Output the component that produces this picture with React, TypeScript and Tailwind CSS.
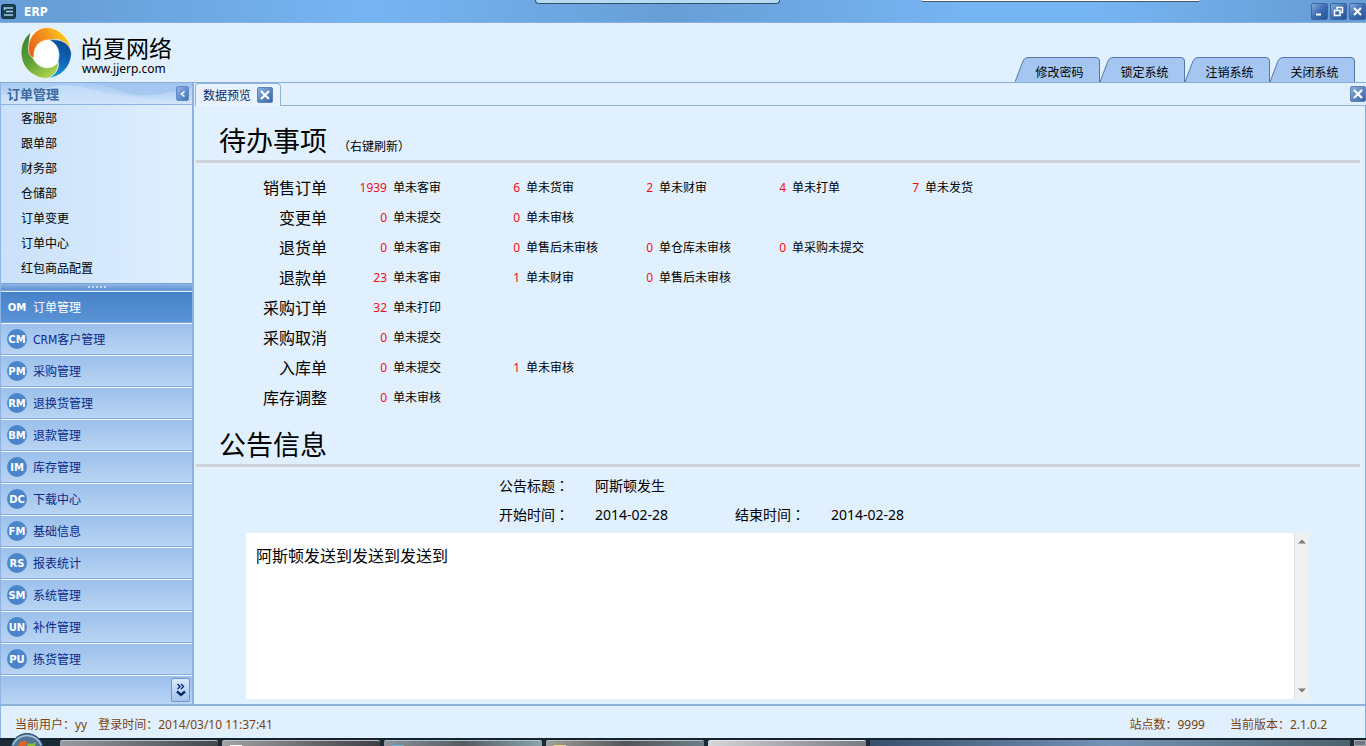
import React, { useState } from 'react';

const subMenus = ['客服部', '跟单部', '财务部', '仓储部', '订单变更', '订单中心', '红包商品配置'];

const modules = [
  { code: 'OM', name: '订单管理' },
  { code: 'CM', name: 'CRM客户管理' },
  { code: 'PM', name: '采购管理' },
  { code: 'RM', name: '退换货管理' },
  { code: 'BM', name: '退款管理' },
  { code: 'IM', name: '库存管理' },
  { code: 'DC', name: '下载中心' },
  { code: 'FM', name: '基础信息' },
  { code: 'RS', name: '报表统计' },
  { code: 'SM', name: '系统管理' },
  { code: 'UN', name: '补件管理' },
  { code: 'PU', name: '拣货管理' },
];

const systemTabs = ['修改密码', '锁定系统', '注销系统', '关闭系统'];

interface TodoRow {
  title: string;
  items: [number, string][];
}

const todoRows: TodoRow[] = [
  { title: '销售订单', items: [[1939, '单未客审'], [6, '单未货审'], [2, '单未财审'], [4, '单未打单'], [7, '单未发货']] },
  { title: '变更单', items: [[0, '单未提交'], [0, '单未审核']] },
  { title: '退货单', items: [[0, '单未客审'], [0, '单售后未审核'], [0, '单仓库未审核'], [0, '单采购未提交']] },
  { title: '退款单', items: [[23, '单未客审'], [1, '单未财审'], [0, '单售后未审核']] },
  { title: '采购订单', items: [[32, '单未打印']] },
  { title: '采购取消', items: [[0, '单未提交']] },
  { title: '入库单', items: [[0, '单未提交'], [1, '单未审核']] },
  { title: '库存调整', items: [[0, '单未审核']] },
];

function Logo() {
  return (
    <svg width="52" height="52" viewBox="0 0 52 52" aria-hidden="true">
      <defs>
        <linearGradient id="lgGreen" x1="0" y1="0" x2="0.6" y2="1">
          <stop offset="0" stopColor="#2f7d32" />
          <stop offset="0.6" stopColor="#5fa336" />
          <stop offset="1" stopColor="#a5cf4c" />
        </linearGradient>
        <linearGradient id="lgOrange" x1="0" y1="0.6" x2="1" y2="0.3">
          <stop offset="0" stopColor="#e8641b" />
          <stop offset="0.5" stopColor="#f59a1b" />
          <stop offset="1" stopColor="#fbd51d" />
        </linearGradient>
        <linearGradient id="lgBlue" x1="0.6" y1="0" x2="0.3" y2="1">
          <stop offset="0" stopColor="#0b4a94" />
          <stop offset="0.5" stopColor="#0d67b4" />
          <stop offset="1" stopColor="#22a0da" />
        </linearGradient>
      </defs>
      <circle cx="26" cy="26" r="25" fill="#fff" />
      <path d="M11 5 A26 26 0 0 0 27 51.500 C35 49 39 42 38 35 C33 43 20 43 14 33 C9 25 8 14 11 5Z" fill="url(#lgGreen)" stroke="#fff" strokeWidth="0.600" />
      <path d="M9 26 C6 12 16 0 28 0.500 A26 26 0 0 1 51 23 C46 14 38 11 31 13 C21 12 13 18 14 31 C11 30 9.500 28 9 26Z" fill="url(#lgOrange)" stroke="#fff" strokeWidth="0.600" />
      <path d="M29 13 C41 11 51 17 51.500 27 A26 26 0 0 1 27 51.500 C35 49 40 41 38 34 C41 25 37 16 29 13Z" fill="url(#lgBlue)" stroke="#fff" strokeWidth="0.600" />
      <circle cx="26" cy="26.500" r="11.500" fill="#fff" />
    </svg>
  );
}

function CloseButton({ label }: { label: string }) {
  return (
    <button
      type="button"
      aria-label={label}
      className="flex size-4 shrink-0 items-center justify-center rounded-xs border border-[#5c82b8] bg-linear-to-br from-[#8db0dc] to-[#3564a8]"
    >
      <svg width="10" height="10" viewBox="0 0 10 10" stroke="#fff" strokeWidth="2.200">
        <path d="M1 1 L9 9 M9 1 L1 9" />
      </svg>
    </button>
  );
}

function WindowButton({ label, children }: { label: string; children: React.ReactNode }) {
  return (
    <button
      type="button"
      aria-label={label}
      className="flex size-[17px] items-center justify-center rounded-xs border border-[#3c66a6] bg-linear-to-br from-[#84aadb] via-[#3d6db3] to-[#28529a]"
    >
      <svg width="11" height="11" viewBox="0 0 11 11" fill="none" stroke="#fff" strokeWidth="1.500">
        {children}
      </svg>
    </button>
  );
}

function TitleBar() {
  return (
    <header className="relative flex h-[23px] shrink-0 items-center justify-between border-b border-[#86aed8] bg-[linear-gradient(90deg,#689ed6_4%,#76b5f3_27%,#689ed6_49%,#76b5f3_71%,#76b5f3_80%,#689ed6_97%)]">
      <div className="flex items-center gap-2 pl-px">
        <svg width="15" height="15" viewBox="0 0 15 15" aria-hidden="true">
          <rect x="0.500" y="0.500" width="14" height="14" rx="2" fill="#1d3f52" stroke="#16303f" />
          <path d="M3 4 H12 M5 7.500 H12 M3 11 H12 M3.500 3.500 V6" stroke="#9fd0e6" strokeWidth="1.600" />
        </svg>
        <h1 className="pt-0.5 text-[12px] font-bold text-white">ERP</h1>
      </div>
      <div className="flex gap-0.5">
        <WindowButton label="最小化">
          <path d="M2 8.500 H7" strokeWidth="2" />
        </WindowButton>
        <WindowButton label="还原">
          <path d="M4 3.500 V1.500 H9.500 V6.500 H7.500 M1.500 4.500 H7 V9.500 H1.500 Z" />
        </WindowButton>
        <WindowButton label="关闭">
          <path d="M2 2 L9 9 M9 2 L2 9" strokeWidth="2.200" />
        </WindowButton>
      </div>
      {/* windows hanging over the top edge */}
      <div className="absolute top-0 left-[535px] h-1 w-[245px] rounded-b-sm border border-t-0 border-[#31536f] bg-[#b5dbf1]" />
      <div className="absolute top-0 left-[921px] h-0.5 w-[279px] rounded-b-xs border-b border-[#4a5560] bg-white" />
    </header>
  );
}

function Banner() {
  return (
    <div className="flex h-[60px] shrink-0 items-end justify-between border-b border-[#86aed8] pr-[11px]">
      <div className="flex gap-2 self-start pt-1 pl-5">
        <Logo />
        <div className="pt-2">
          <div className="text-[23px] leading-7">尚夏网络</div>
          <div className="pl-0.5 font-['Noto_Sans',sans-serif] text-[12px] leading-3">www.jjerp.com</div>
        </div>
      </div>
      <nav className="flex">
        {systemTabs.map((tab) => (
          <button key={tab} type="button" className="relative h-[25px] w-[85px] pt-1.5 pl-1 text-[12px]">
            <svg className="absolute inset-0" width="85" height="25" viewBox="0 0 85 25" aria-hidden="true">
              <path d="M0 25 L8 4 Q9.500 0.500 13 0.500 H81 Q84.500 0.500 84.500 4 V25" fill="#a5c6f1" stroke="#5578a8" />
            </svg>
            <span className="relative">{tab}</span>
          </button>
        ))}
      </nav>
    </div>
  );
}

function Sidebar() {
  const [active, setActive] = useState('OM');

  return (
    <aside className="flex w-[194px] shrink-0 flex-col border-r-2 border-l border-[#8db2e3]">
      <div className="relative flex h-[22px] items-center justify-between border-b border-[#8db2e3] bg-linear-to-b from-[#a9cbf2] to-[#cbe1f9] pr-[3px] pl-1.5">
        <svg className="absolute inset-0 size-full" viewBox="0 0 190 22" preserveAspectRatio="none" aria-hidden="true">
          <path d="M60 2 C90 2 110 18 190 18 V22 H0 V12 C30 14 50 2 60 2Z" fill="#d6e8fb" opacity="0.500" />
          <path d="M110 5 C140 20 165 10 190 5 V0 H90Z" fill="#9fc3ee" opacity="0.700" />
        </svg>
        <h2 className="relative pt-0.5 text-[13px] font-bold text-[#39699f]">订单管理</h2>
        <button
          type="button"
          aria-label="收起"
          className="relative flex h-[15px] w-[13px] items-center justify-center rounded-xs border border-[#5f89c4] bg-linear-to-br from-[#8fb3e2] to-[#4173ba]"
        >
          <svg width="6" height="6" viewBox="0 0 6 6" fill="none" stroke="#fff" strokeWidth="1.500">
            <path d="M4.500 0.500 L1.500 3 L4.500 5.500" />
          </svg>
        </button>
      </div>

      <ul className="flex-1 bg-linear-to-r from-[#c9e1fa] to-[#e0effe] pt-px text-[12px]">
        {subMenus.map((item) => (
          <li key={item} className="flex h-[25px] items-center pl-5">
            <a href="#">{item}</a>
          </li>
        ))}
      </ul>

      <div className="flex h-2 items-center justify-center gap-0.5 border-y border-[#7ba5d8] bg-linear-to-b from-[#8fb6e6] to-[#5e91cf]">
        {[0, 1, 2, 3, 4].map((dot) => (
          <span key={dot} className="size-0.5 bg-[#c5dbf4]" />
        ))}
      </div>

      <nav>
        {modules.map((m) => (
          <button
            key={m.code}
            type="button"
            onClick={() => setActive(m.code)}
            className={
              active === m.code
                ? 'flex h-8 w-full items-center gap-1.5 border-t border-b border-t-[#dcebfb] border-b-[#7ba3d4] bg-linear-to-b from-[#4781c8] to-[#5a94d6] pl-1.5 text-[12px] text-white'
                : 'flex h-8 w-full items-center gap-1.5 border-t border-b border-t-[#f2f8ff] border-b-[#84abdc] bg-linear-to-b from-[#9bc0ec] to-[#b9d4f3] pl-1.5 text-[12px] text-[#0a2a86]'
            }
          >
            <span
              className={
                active === m.code
                  ? "flex size-5 items-center justify-center font-['DejaVu_Sans',sans-serif] text-[10px] font-bold text-white"
                  : "flex size-5 items-center justify-center rounded-full bg-[#4b86cb] font-['DejaVu_Sans',sans-serif] text-[10px] font-bold text-white"
              }
            >
              {m.code}
            </span>
            <span className="pt-0.5">{m.name}</span>
          </button>
        ))}
      </nav>

      <div className="flex h-[29px] items-center justify-end border-t border-[#f2f8ff] bg-linear-to-b from-[#9bc0ec] to-[#b9d4f3] pr-0.5">
        <button
          type="button"
          aria-label="更多"
          className="flex h-6 w-[19px] items-center justify-center rounded-xs border border-[#6f97ce] bg-linear-to-b from-[#d9e9fb] to-[#a3c4ee]"
        >
          <svg width="10" height="14" viewBox="0 0 10 14" fill="none" stroke="#0a2a6e">
            <path d="M1.500 1 L4 3.500 L1.500 6 M5 1 L7.500 3.500 L5 6" strokeWidth="1.400" />
            <path d="M1 8.500 L5 12 L9 8.500" strokeWidth="2.400" />
          </svg>
        </button>
      </div>
    </aside>
  );
}

function TabStrip() {
  return (
    <div className="flex h-[23px] shrink-0 pl-px">
      <div className="flex w-[86px] items-center gap-1.5 rounded-t-sm border border-b-0 border-[#8fb3db] bg-[#e8f3ff] pl-[7px] text-[12px] text-[#0b2a6c]">
        <span className="pt-0.5">数据预览</span>
        <CloseButton label="关闭数据预览" />
      </div>
      <div className="flex flex-1 items-center justify-end border-b border-[#8fb3db]">
        <CloseButton label="关闭" />
      </div>
    </div>
  );
}

function TodoTable() {
  return (
    <table className="mt-[10px] w-[798px] table-fixed border-collapse self-start">
      <tbody>
        {todoRows.map((row) => (
          <tr key={row.title} className="h-[30px]">
            <th scope="row" className="p-0 text-right text-[16px] leading-5 font-normal">
              {row.title}
            </th>
            {row.items.map(([count, text], i) => (
              <td key={i} className="p-0 text-[12px] leading-5">
                <div className="flex gap-1.5">
                  <span className="w-[60px] shrink-0 text-right text-[#f20d18]">{count}</span>
                  <span className="whitespace-nowrap">{text}</span>
                </div>
              </td>
            ))}
          </tr>
        ))}
      </tbody>
    </table>
  );
}

function NoticeLabel({ children }: { children: React.ReactNode }) {
  return (
    <dt>
      {children}
      <span className="font-['Noto_Sans_CJK_TC',sans-serif]">：</span>
    </dt>
  );
}

function Notice() {
  return (
    <>
      <dl className="mt-1 grid auto-rows-[29px] grid-cols-[96px_140px_96px_140px] items-center pl-[305px] text-[14px] leading-5">
        <NoticeLabel>公告标题</NoticeLabel>
        <dd className="col-span-3">阿斯顿发生</dd>
        <NoticeLabel>开始时间</NoticeLabel>
        <dd>2014-02-28</dd>
        <NoticeLabel>结束时间</NoticeLabel>
        <dd>2014-02-28</dd>
      </dl>
      <div className="mt-1 mr-14 mb-[5px] ml-[52px] flex min-h-[120px] flex-1">
        <textarea
          readOnly
          aria-label="公告内容"
          defaultValue="阿斯顿发送到发送到发送到"
          className="flex-1 resize-none bg-white px-2.5 py-[11px] text-[16px] leading-6 outline-none"
        />
        <div className="flex w-[15px] flex-col items-center justify-between border-l border-[#e2e2e2] bg-[#f0f0f0] py-1.5">
          <svg width="8" height="5" viewBox="0 0 8 5" aria-hidden="true">
            <path d="M4 0.500 L8 4.500 H0Z" fill="#7d7d7d" />
          </svg>
          <svg width="8" height="5" viewBox="0 0 8 5" aria-hidden="true">
            <path d="M4 4.500 L8 0.500 H0Z" fill="#7d7d7d" />
          </svg>
        </div>
      </div>
    </>
  );
}

function StatusBar() {
  return (
    <footer className="flex h-[34px] shrink-0 items-center justify-between border-x border-t-2 border-[#8db2dc] pt-1.5 pr-[38px] pl-3.5 font-['Noto_Sans','Noto_Sans_CJK_SC',sans-serif] text-[12px] text-[#7a4212]">
      <div className="flex gap-[11px]">
        <span>当前用户：yy</span>
        <span>登录时间：2014/03/10 11:37:41</span>
      </div>
      <div className="flex gap-[25px]">
        <span>站点数：9999</span>
        <span>当前版本：2.1.0.2</span>
      </div>
    </footer>
  );
}

function Taskbar() {
  return (
    <div className="relative flex h-2 shrink-0 gap-1 border-t-2 border-[#14222e] bg-[#1b2a38] pl-[60px]">
      <svg className="absolute -top-[7px] left-2.5" width="34" height="13" viewBox="0 0 34 13" aria-hidden="true">
        <circle cx="17" cy="17" r="16.500" fill="#4f7594" stroke="#2c4a62" />
        <path d="M3 12 A15 15 0 0 1 31 12" fill="none" stroke="#a9c6db" strokeWidth="1.500" />
        <path d="M8 13 C10 7 14 7 17 9 L16 13Z" fill="#e0622a" />
        <path d="M18 10 C21 11 23 11 26 9 L25 13 H17Z" fill="#8dbb3a" />
      </svg>
      <div className="w-[158px] rounded-t-xs border-t border-[#b9bec2] bg-linear-to-r from-[#989ca0] to-[#43484d]" />
      <div className="w-[158px] rounded-t-xs border-t border-[#b9bec2] bg-linear-to-r from-[#a4a4a6] to-[#3d3f44] pl-2">
        <div className="mt-1 h-px w-3 bg-white" />
      </div>
      <div className="w-[158px] rounded-t-xs border-t border-[#a9c3cd] bg-linear-to-r from-[#8d979c] via-[#565b60] to-[#8aa5ae] pl-2">
        <div className="mt-1 h-px w-3 bg-[#5cb8dc]" />
      </div>
      <div className="w-[158px] rounded-t-xs border-t border-[#b9bec2] bg-linear-to-r from-[#a2a29c] via-[#53565a] to-[#6c7f88] pl-2">
        <div className="mt-1 h-px w-3 bg-[#e3d588]" />
      </div>
      <div className="w-[158px] rounded-t-xs border-t border-[#e4e6e8] bg-linear-to-r from-[#d5d7da] to-[#777a80]" />
      <div className="flex-1 bg-linear-to-r from-[#39506d] via-[#7593b6] to-[#4d626c]" />
      <div className="w-3 border border-[#a0a8ad] bg-[#70797f]" />
    </div>
  );
}

export default function App() {
  return (
    <div className="flex h-screen flex-col overflow-hidden bg-[#e1f0fe] font-['DejaVu_Sans_Condensed','Noto_Sans_CJK_SC',sans-serif] text-black">
      <TitleBar />
      <Banner />
      <div className="flex min-h-0 flex-1">
        <Sidebar />
        <div className="flex min-w-0 flex-1 flex-col">
          <TabStrip />
          <main className="flex min-h-0 flex-1 flex-col border-r border-[#8db2dc] font-['Noto_Sans','Noto_Sans_CJK_SC',sans-serif]">
            <div className="mr-[5px] ml-0.5 flex h-[57px] items-end gap-[11px] border-b-[3px] border-[#cfd2d6] pb-[3px] pl-[23px]">
              <h2 className="text-[27px] leading-8">待办事项</h2>
              <span className="text-[12px] leading-5">（右键刷新）</span>
            </div>
            <TodoTable />
            <div className="mr-[5px] ml-0.5 flex h-[54px] items-end border-b-[3px] border-[#cfd2d6] pb-[3px] pl-[23px]">
              <h2 className="text-[27px] leading-8">公告信息</h2>
            </div>
            <Notice />
          </main>
        </div>
      </div>
      <StatusBar />
      <Taskbar />
    </div>
  );
}
